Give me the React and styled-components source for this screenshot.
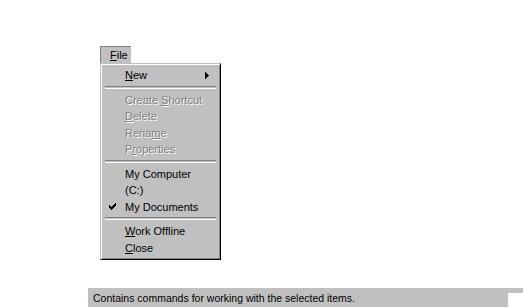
import React from 'react'
import styled, { createGlobalStyle } from 'styled-components'

const GlobalStyle = createGlobalStyle`
  html, body {
    margin: 0;
    padding: 0;
    background: #ffffff;
  }
  body {
    font-family: "Liberation Sans", Arial, sans-serif;
    font-size: 11px;
    color: #000000;
  }
`

const items = [
  { label: 'New', key: 'N', submenu: true },
  { sep: true },
  { label: 'Create Shortcut', key: 'S', disabled: true },
  { label: 'Delete', key: 'D', disabled: true },
  { label: 'Rename', key: 'm', disabled: true },
  { label: 'Properties', key: 'r', disabled: true },
  { sep: true },
  { label: 'My Computer' },
  { label: '(C:)' },
  { label: 'My Documents', checked: true },
  { sep: true },
  { label: 'Work Offline', key: 'W' },
  { label: 'Close', key: 'C' },
]

const Mnemonic = ({ label, k }) => {
  if (!k) return label
  const i = label.indexOf(k)
  if (i < 0) return label
  return (
    <>
      {label.slice(0, i)}
      <u>{label[i]}</u>
      {label.slice(i + 1)}
    </>
  )
}

const App = () => {
  return (
    <Page>
      <GlobalStyle />
      <Stage>
        <MenuButton>
          <u>F</u>ile
        </MenuButton>
        <Menu>
          {items.map((item, index) =>
            item.sep ? (
              <Separator key={index} />
            ) : (
              <Item key={index}>
                <Check>
                  {item.checked && (
                    <svg width="7" height="7" viewBox="0 0 7 7">
                      <path
                        d="M0 2h1v1h1v1h1V3h1V2h1V1h1V0h1v3H6v1H5v1H4v1H3v1H2V6H1V5H0z"
                        fill="#000"
                      />
                    </svg>
                  )}
                </Check>
                <Label disabled={item.disabled}>
                  <Mnemonic label={item.label} k={item.key} />
                </Label>
                {item.submenu && (
                  <Arrow>
                    <svg width="4" height="7" viewBox="0 0 4 7">
                      <path d="M0 0h1v1h1v1h1v1h1v1H3v1H2v1H1v1H0z" fill="#000" />
                    </svg>
                  </Arrow>
                )}
              </Item>
            )
          )}
        </Menu>
      </Stage>
      <StatusBar>
        <StatusPanel>Contains commands for working with the selected items.</StatusPanel>
      </StatusBar>
    </Page>
  )
}

const Page = styled.div`
  width: 523px;
  height: 307px;
  display: flex;
  flex-direction: column;
  overflow: hidden;
`

const Stage = styled.div`
  display: flex;
  flex-direction: column;
  align-items: flex-start;
  padding: 46px 0 0 100px;
`

const MenuButton = styled.div`
  box-sizing: border-box;
  width: 31px;
  height: 17px;
  padding-left: 9px;
  line-height: 16px;
  background: #c0c0c0;
  border-top: 1px solid #808080;
  border-left: 1px solid #808080;
`

const Menu = styled.div`
  box-sizing: border-box;
  width: 121px;
  height: 197px;
  background: #c0c0c0;
  border-top: 1px solid #c0c0c0;
  border-left: 1px solid #c0c0c0;
  border-right: 1px solid #000000;
  border-bottom: 1px solid #000000;
  box-shadow: inset 1px 1px 0 #ffffff, inset -1px -1px 0 #808080;
  padding: 3px;
  display: flex;
  flex-direction: column;
`

const Item = styled.div`
  height: 17px;
  display: flex;
  align-items: center;
`

const Check = styled.div`
  width: 21px;
  display: flex;
  justify-content: flex-start;
  padding-left: 5px;
  box-sizing: border-box;
`

const Label = styled.span`
  flex: 1;
  white-space: nowrap;
  color: ${(p) => (p.disabled ? '#808080' : '#000000')};
  text-shadow: ${(p) => (p.disabled ? '1px 1px 0 #ffffff' : 'none')};
`

const Arrow = styled.div`
  width: 12px;
  display: flex;
  align-items: center;
`

const Separator = styled.div`
  height: 8px;
  display: flex;
  align-items: center;
  padding: 0 1px;

  &::before {
    content: '';
    flex: 1;
    height: 1px;
    border-top: 1px solid #808080;
    border-bottom: 1px solid #ffffff;
  }
`

const StatusBar = styled.div`
  margin-top: auto;
  margin-left: 88px;
  height: 19px;
  display: flex;
  background: linear-gradient(#c0c0c0 0 5px, #ffffff 5px);
`

const StatusPanel = styled.div`
  width: 420px;
  background: #c0c0c0;
  padding: 3px 0 0 5px;
  box-sizing: border-box;
  font-size: 10.5px;
  line-height: 15px;
  white-space: nowrap;
`

export default App
